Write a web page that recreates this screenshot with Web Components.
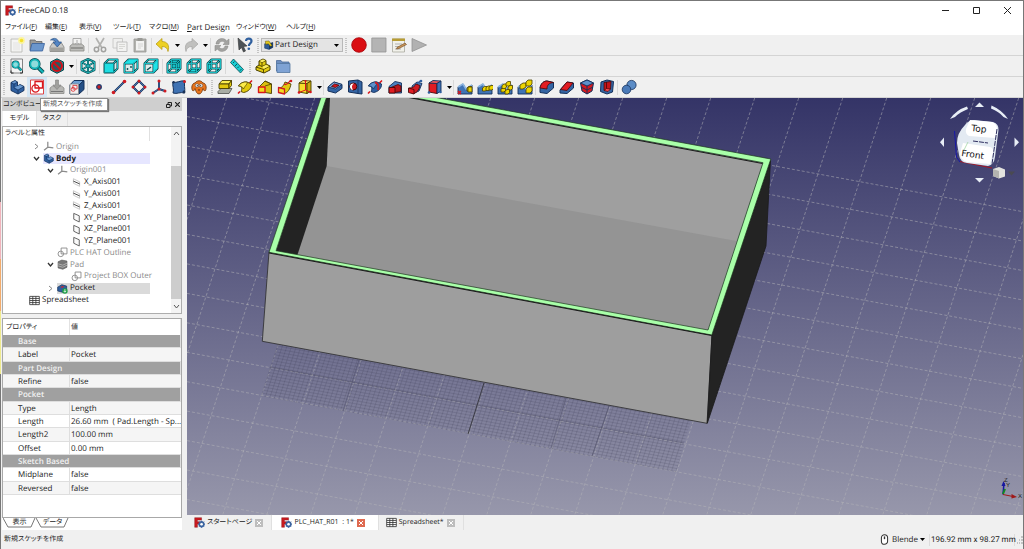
<!DOCTYPE html>
<html lang="ja">
<head>
<meta charset="utf-8">
<title>FreeCAD 0.18</title>
<style>
html,body{margin:0;height:100%}
body{font:8px/12px "Open Sans","Noto Sans CJK JP",sans-serif;font-feature-settings:"palt";text-rendering:geometricPrecision;color:#1a1a1a;background:#f0f0f0;overflow:hidden}
</style>
</head>
<body>
<fc-app></fc-app>
<script>
const BASE = `*{box-sizing:border-box}
button,select{font:inherit;font-feature-settings:inherit;text-rendering:inherit;color:inherit;border:0;background:none;padding:0;margin:0}
svg{display:block}ul{list-style:none;margin:0;padding:0}.ja{font-size:7px}`;

function define(name, render, after) {
  customElements.define(name, class extends HTMLElement {
    connectedCallback() {
      if (this.shadowRoot) return;
      this.attachShadow({ mode: 'open' }).innerHTML = render(this);
      if (after) after(this, this.shadowRoot);
    }
  });
}

/* ---------- icon drawings, 16 x 16 ---------- */
const P = (d, f, s = 'none', w = 1) => `<path d="${d}" fill="${f}" stroke="${s}" stroke-width="${w}" stroke-linejoin="round"/>`;
const C = (x, y, r, f, s = 'none', w = 1) => `<circle cx="${x}" cy="${y}" r="${r}" fill="${f}" stroke="${s}" stroke-width="${w}"/>`;
const DB = '#14305a', DT = '#0a4a50', DY = '#4a4000', DR = '#4a0808';
const box = (a, b, c, s) => P('M1 6L10 6L10 15L1 15Z', a, s) + P('M1 6L5 1.5L15 1.5L10 6Z', b, s) + P('M10 6L15 1.5L15 10.5L10 15Z', c, s);
const frame = (fill) => fill + P('M1.5 5.5H10.5V14.5H1.5ZM1.5 5.5L5.5 1.5H14.5V10.5L10.5 14.5M10.5 5.5L14.5 1.5M5.5 1.5V10.5H14.5M5.5 10.5L1.5 14.5', 'none', DT, 2)
  + P('M1.5 5.5H10.5V14.5H1.5ZM1.5 5.5L5.5 1.5H14.5V10.5L10.5 14.5M10.5 5.5L14.5 1.5M5.5 1.5V10.5H14.5M5.5 10.5L1.5 14.5', 'none', '#19b9be', 1);
const cubeFront = (f) => P('M1.5 5.5H10.5V14.5H1.5ZM1.5 5.5L5.5 1.5H14.5V10.5L10.5 14.5M10.5 5.5L14.5 1.5', '#dfeaea', DT, 2) + P('M1.5 5.5H10.5V14.5H1.5ZM1.5 5.5L5.5 1.5H14.5V10.5L10.5 14.5M10.5 5.5L14.5 1.5', 'none', '#16bfc4', 1) + f;
const magnifier = (s) => `<g transform="${s}">` + P('M9 9L14.5 14.5', 'none', DT, 4) + P('M9 9L14.5 14.5', 'none', '#16b5b9', 2.4) + C(6, 6, 4.4, '#d5eeee', DT, 3) + C(6, 6, 4.4, '#8edcdc', '#16b5b9', 1.8) + '</g>';
const padShape = (f, g, s) => P('M1 12.5L4 9.500H15L12 14.500H1Z', '#a9ada5', '#4c4f4b', .8) + P('M2 5L5 1.500H14.500L12 5Z', f, s, .9) + P('M2 5H12V9.5H2Z', g, s, .9) + P('M12 5L14.500 1.500V6.500L12 9.500Z', g, s, .9);
const roll = (f, g, s, ax) => P('M1 14.500L3 12.500M12.500 4L15 1.500', 'none', ax, 1.6) + P('M1.500 7C3 4 7 2.500 10 3L14.500 5C15 9 11 13 6.500 13.500L4 12.500C6 9 4 7 1.500 7Z', g, s, .9) + P('M1.500 7C3 4 7 2.500 10 3C11 5 8 6.500 6.500 10C5.500 8 4 7 1.500 7Z', f, s, .7);
const loft = (f, g, s, r) => P('M2 8L8 2L14.500 5V14.500L8 13.500Z', g, s, .9) + P('M8 2L14.500 5M8 7L14.500 5', 'none', s, .8) + P('M1.500 8H8V13.500H1.500Z', f, r, 1.4);
const sweep = (f, g, s, r) => P('M2 9C5 9 7 6 8 3L14 5C13 10 11 14 7 14.500Z', g, s, .9) + P('M1.500 8.500L7.500 10V15L1.500 13.500Z', f, r, 1.3) + P('M7 5C10 7 12 3 13.500 1.500', 'none', r, 1.3) + C(14, 2, 1.3, r);
const land = P('M1 15V8L6 5L9 10L15 6V15Z', '#3f73b5', DB, .9) + P('M1 8L6 5L9 10L15 6', 'none', '#8ab4e0', 1.6);
const yb = (x, y) => P(`M${x} ${y}l2-1.500h2.500v3l-1.500 1.500h-3Z`, '#edd400', DY, .8);
const fbox = box('#3465a4', '#6fa0d4', '#244f86', DB);
const sheetIcon = P('M1 2H15V14H1Z', '#fff', '#333', 1.2) + P('M1 5H15M1 8H15M1 11H15M5.500 2V14M10 2V14', 'none', '#333', 1.2);
const sketchRed = (c) => P('M6 2.500H13.500V9H6Z', 'none', c, 1.3) + C(6.500, 9.500, 3.600, 'none', c, 1.3);
const ICONS = {
  logo: P('M1 1H11V4.500H5V7H9V10H5V15H1Z', '#cb1b20', '#7c0d10', .6) + C(11, 10.500, 3.300, 'none', '#3b63a0', 2.600) + P('M11 5.200V16M5.700 10.500H16M7.200 6.700L14.800 14.300M14.800 6.700L7.200 14.300', 'none', '#3b63a0', 1.100) + C(11, 10.500, 1.800, '#fff'),
  new: P('M2 2H13V15H2Z', '#f5f5f4', '#b5b5b0', .8) + P('M4 13.500H11V5H4Z', '#ececeb') + C(12.500, 3.500, 3.400, '#fbf4a0') + C(12.500, 3.500, 1.800, '#f4df2a'),
  open: P('M1 13V3H6L7 4.500H13V13Z', '#9a9a98', '#666', .8) + P('M3 6.500H15.500L13.500 14H1Z', '#6b96cc', '#37609a', .8),
  save: P('M1 10L3.500 6H12.500L15 10V14.500H1Z', '#c9c9c7', '#83837f', .8) + P('M1.500 10.500H14.500V14H1.500Z', '#a2a29e') + P('M1.500 3C5 0 9 1.500 9.500 5H12.500L8.300 10L4 5H6.500C6 3.200 4 2.600 1.500 3Z', '#5285c4', '#264f83', .7),
  print: P('M4 1.500H12V8H4Z', '#f3f3f2', '#999', .8) + P('M1 9L3.500 7H12.500L15 9V14H1Z', '#bdbdba', '#888884', .8) + P('M2 11H14', 'none', '#858581', 1.400) + P('M8 3V8M6 6L8 8.200L10 6', 'none', '#aaa', 1),
  cut: P('M4 1L10 11M12 1L6 11', 'none', '#b2b2b0', 1.700) + C(4.500, 12.500, 2.200, 'none', '#a2a2a0', 1.500) + C(11.500, 12.500, 2.200, 'none', '#a2a2a0', 1.500),
  copy: P('M1 1.500H10.500V11H1Z', '#efefee', '#c6c6c4', .9) + P('M5 5H15V14.500H5Z', '#f2f2f1', '#bababa', .9) + P('M7 7.500H13M7 9.500H13M7 11.500H11', 'none', '#cfcfcd', .8),
  paste: P('M2 2H14V15H2Z', '#b2b2ae', '#989894', .8) + P('M4 4H12V13.500H4Z', '#f3f3f2') + P('M5.500 1H10.500V4H5.500Z', '#999995') + P('M6 7H11M6 9H11M6 11H9', 'none', '#ccc', .8),
  undo: P('M1 7L7 1.500V4.500C12 4.500 15 8 13 14.500C12.500 11 10.500 9.500 7 9.500V12.500Z', '#edd023', '#b3970a', .7),
  redo: P('M15 7L9 1.500V4.500C4 4.500 1 8 3 14.500C3.500 11 5.500 9.500 9 9.500V12.500Z', '#c0c0be', '#a5a5a3', .7),
  refresh: P('M2 7C2.500 1 10.500 0 12.500 4L15 2V7.500H9L11 5.700C9 3.500 5.500 4 5 7ZM14 9C13.500 15 5.500 16 3.500 12L1 14V8.500H7L5 10.300C7 12.500 10.500 12 11 9Z', '#a3a3a1', '#8d8d8b', .6),
  whats: P('M1 1L10 9L6.500 9.500L8.500 14L6.500 15L4.500 10.500L2 13Z', '#4d5358', '#333', .6) + P('M9 4C9 .8 14.500 .8 14.500 4C14.500 6.500 11.800 6.300 11.800 9', 'none', '#2f5f9e', 2.200) + C(11.800, 11.700, 1.300, '#2f5f9e'),
  wb: P('M1 6V13L8 15L14 12V4L8 6Z', '#2f5c98', DB, .8) + P('M8 6V15L14 12V4Z', '#173863') + P('M2 2L8 1.500L13 9L10 10L7 6L3 7Z', '#e4c91d', DY, .7),
  record: C(8, 8, 7.300, '#da0d12', '#a30006', .8),
  stop: P('M.800 1H15V15H.800Z', '#b4b4b4', '#939393', .8),
  edit: P('M1.500 2H13.500V15H1.500Z', '#f1f1ea', '#a9a99f', .8) + P('M1 1.500H14V4H1Z', '#b79c35') + P('M4 7H11M4 9.500H9M4 12H10', 'none', '#aaa', .9) + P('M6 10.500L14 6L15.500 7.500L8 11.500L5.500 12Z', '#c8955a', '#6d451b', .6),
  play: P('M1 1.500L15.500 8L1 14.500Z', '#b1b1b1', '#939393', .8),
  fitall: P('M2 1H13.500V15H2Z', '#f4f4f4', '#777', .9) + P('M2 12.500V15H4.500M11 15H13.500V12.500', 'none', '#333', 1) + magnifier('translate(2.500 2.500) scale(.68)'),
  fitsel: magnifier('translate(-.3 0)'),
  drawstyle: P('M8 .800L14.500 4V12L8 15.300L1.500 12V4Z', '#159a9e', DT, 1) + C(8, 8, 5, '#2a5a60', '#d01018', 2) + P('M4.500 4.500L11.500 11.500', 'none', '#d01018', 2),
  iso: P('M8 1L14.500 4V12L8 15L1.500 12V4ZM1.500 4L8 8L14.500 4M8 8V15M8 1V8M1.500 12L8 8L14.500 12', '#dfeaea', DT, 2) + P('M8 1L14.500 4V12L8 15L1.500 12V4ZM1.500 4L8 8L14.500 4M8 8V15M8 1V8M1.500 12L8 8L14.500 12', 'none', '#25bcc1', .9),
  front: cubeFront(P('M1.500 5.500H10.500V14.500H1.500Z', '#1fdde2', '#0a8185', .8)),
  top: cubeFront(P('M2 5L5.800 2H14L10.200 5Z', '#1fe3e8') + C(4.500, 11, .9, DT) + C(8, 9, .9, DT)),
  right: cubeFront(P('M11 5.700L14 2.500V10.200L11 13.500Z', '#1fe3e8') + P('M4 12L8 9', 'none', DT, 1.300)),
  rear: frame(P('M5.500 1.500H14.500V10.500H5.500Z', '#12c3c9')),
  bottom: frame(P('M1.500 14.500L5.500 10.500H14.500L10.500 14.500Z', '#22dbe0')),
  left: frame(P('M1.500 14.500V5.500L5.500 1.500V10.500Z', '#22dbe0')),
  measure: P('M4.500 1L14.500 11.500L11.500 15L1.500 4.500Z', '#19cdd2', DT, .8) + P('M5.500 3.500L4 5M8 6L6 8M10 8.500L8.500 10M12.500 11L10.800 12.800', 'none', DT, .9),
  part: P('M1 9L4 7V3L8 1L11 2.500V6L15 8V12L9 15L1 12Z', '#e2cb12', DY, 1) + P('M4 3L7 4.500L11 2.500M7 4.500V8.500L11 6.500M1 9L8.500 11.500L15 8M8.500 11.500V15M4 7L7 8.500', 'none', DY, .9) + P('M4.500 3L8 1.500L10.500 2.600L7 4.200ZM7.300 8.800L11 6.900L14 8.200L9 10.700Z', '#fbee65'),
  group: P('M1.500 13V2.500H6L7 4H14V13Z', '#6d8fc0', '#4c6c9a', .8) + P('M1.500 5.500H15V14.500H2Z', '#7fa3d4', '#54779f', .8),
  body: P('M2 3.500L6 1.500L8.500 3V7L11 5.500L15 7.500V11.500L9 15L2 11.500Z', '#2f5f9f', DB, .9) + P('M2 3.500L5 5V9L9 11L15 7.500M9 11V15M5 5L8.500 3', 'none', DB, .7) + P('M5.500 8.500L8.500 7L11 5.900L14.200 7.500L9 10.400Z', '#6d9bd0') + P('M2.800 3.500L6 2L7.800 3L5 4.500Z', '#6d9bd0'),
  sketch: P('M1.500 1H14.500V15H1.500Z', '#fff', '#d33', .9) + sketchRed('#d8161c'),
  map: P('M1 9L3.500 7H12.500L15 9V14.500H1Z', '#b7b7b4', '#8b8b88', .8) + P('M6.500 1H9.500V6H12L8 10.500L4 6H6.500Z', '#a0a09d', '#82827f', .6) + P('M2 12.500H14', 'none', '#777', 1),
  mapface: fbox + P('M1 5H9.500V15H1Z', '#f2eeee', '#888', .8) + `<g transform="translate(.5 5) scale(.56)">${sketchRed('#d8161c')}</g>`,
  point: C(8, 8, 2.300, '#c81e24', '#1e3d70', 1.300),
  line: P('M2.500 13.500L13.500 2.500', 'none', DB, 1.900) + P('M2.500 13.500L13.500 2.500', 'none', '#4a78b5', .9) + C(2.500, 13.500, 1.800, '#cf1b22') + C(13.500, 2.500, 1.800, '#cf1b22'),
  plane: P('M8 2L14 8L8 14L2 8Z', '#f2f2f2', DB, 2) + P('M8 2L14 8L8 14L2 8Z', 'none', '#4a78b5', .9) + C(2, 8, 1.500, '#cf1b22') + C(14, 8, 1.500, '#cf1b22') + C(8, 2, 1.500, '#cf1b22') + C(8, 14, 1.500, '#cf1b22'),
  lcs: P('M8 2V10L14 12M8 10L2 14', 'none', DB, 1.900) + P('M8 2V10L14 12M8 10L2 14', 'none', '#4a78b5', .8) + C(8, 2, 1.500, '#cf1b22') + C(14, 12, 1.500, '#cf1b22') + C(2, 14, 1.500, '#cf1b22') + C(8, 10, 1.500, '#cf1b22'),
  binder: P('M2 3C6 4.500 9 1 14 2C12.500 6 14.500 9 13.500 14C9 12.500 6 15.500 2 14C3.500 10 1 7 2 3Z', '#3f72b3', DB, 1) + C(13.500, 2.500, 1.500, '#cf1b22') + C(2.500, 3.200, 1.200, '#1a3156') + C(13, 13, 1.400, '#1a3156'),
  clone: P('M4 4C1 4 0 9 1.500 11.500C3 12 4 11 4 9.500C5 13 6 15 8 15S11 13 12 9.500C12 11 13 12 14.500 11.500C16 9 15 4 12 4C10 1 6 1 4 4Z', '#e8741c', '#6e350a', .8) + C(6, 6.500, 1.700, '#fff', '#333', .5) + C(10, 6.500, 1.700, '#fff', '#333', .5) + C(6.300, 6.600, .6, '#222') + C(9.700, 6.600, .6, '#222') + P('M6.800 10.500H9.200L8 12Z', '#50260a'),
  pad: padShape('#fbee50', '#e2c80d', DY), revolve: roll('#fbea4a', '#e0c70e', DY, '#d8161c'), aloft: loft('#f3dc22', '#d9bf10', DY, '#d8161c'), asweep: sweep('#f3dc22', '#e0c70e', DY, '#cf1b22'),
  aprim: P('M2 4L10 4.500V14.500L2 13Z', '#f5df2a', DY, .9) + P('M2 4L6 1.500L14 2L10 4.500Z', '#fbee65', DY, .9) + P('M10 4.500L14 2V12L10 14.500Z', '#c9af0e', DY, .9) + P('M8.500 2V11M2 13.500L8.500 11L14 13.500', 'none', '#d8161c', 1) + C(2, 13.500, 1.300, '#d8161c') + C(13.500, 13, 1.300, '#d8161c') + C(8.500, 2, 1.100, '#d8161c'),
  pocket: P('M1 8L7 3L15 5.500V9.500L8.500 14L1 12Z', '#3465a4', DB, 1) + P('M1 8L7 3L15 5.500L8.500 10Z', '#7aa7da', DB, .8) + P('M4.500 7.500L7.500 5L12 6.200L8.500 8.500Z', '#d8161c', DR, .8),
  hole: P('M1.500 2L11 1L15 3V15L11 14.500L1.500 13Z', '#3465a4', DB, 1) + P('M11 1V14.500', 'none', DB, .8) + C(6.300, 7.500, 3.500, '#cf1b22', DR, 1) + P('M4 5A3.500 3.500 0 0 0 6 11A5 5 0 0 1 7 4.300Z', '#fff'),
  groove: roll('#5d90ca', '#2f5f9f', DB, '#d8161c') + P('M8 3.500C11 4 12 7 11 11', 'none', '#cf1b22', 2),
  sloft: P('M2 7.500L8 2.500L14.500 4V14L2 14Z', '#4b80bf', DB, .9) + P('M4 8.500L11 5.500L14 7V12.500L8 13.500Z', '#b8151b', DR, .8) + P('M2 8.500H8V14H2Z', '#e11c22', DR, .9),
  ssweep: P('M5 7L10 3L15 4.500L12 12L6 14.500Z', '#4b80bf', DB, .9) + P('M2 9C6 9 8 7 9 5L13 6.500C12 11 10 13.500 7 14.500Z', '#cf1b22', DR, .8) + P('M1.500 9L7 10.500V15L1.500 13.500Z', '#e11c22', DR, .9) + P('M10 4.500L14 1.500', 'none', '#2f5f9f', 1.300) + C(14, 2, 1.300, '#2f5f9f'),
  sprim: P('M2 4L10 4.500V14.500L2 13Z', '#e01c22', DR, .9) + P('M2 4L6 1.500L14 2L10 4.500Z', '#f0555a', DB, .9) + P('M10 4.500L14 2V12L10 14.500Z', '#3f73b5', DB, .9) + C(2, 13.500, 1.300, '#2f5f9f') + C(13.500, 13, 1.300, '#2f5f9f'),
  mirror: land + yb(10, 9) + P('M11 8h4v5h-4Z', '#edd400', DY, .8) + P('M1 12L4 15M4 12L1 15', 'none', '#d8161c', 1.200),
  linear: land + yb(5.500, 9) + yb(9, 8.500) + yb(12, 8), polar: land + yb(4, 10) + yb(5, 6.500) + yb(9, 4) + yb(11, 8) + yb(8, 12),
  multi: land + P('M3 6L6 4H9V8L6 10H3Z', '#edd400', DY, .8) + P('M9 3L11 1H15V5L13 7H9Z', '#edd400', DY, .8) + P('M9 10L11 8H15V12L13 14H9Z', '#edd400', DY, .8),
  fillet: P('M1 9C2 4 5 2 8 2L14.500 3.500V9L8 14.500L1 13.500Z', '#3465a4', DB, 1) + P('M1 9C2 4 5 2 8 2L14.500 3.500C10 4 8 6 8 10Z', '#e11c22', DR, .8),
  chamfer: P('M1 11L8 3L14.500 4V9L8 14.500L1 14Z', '#3465a4', DB, 1) + P('M1.500 10.500L8 3L14 4L8 11.500Z', '#e11c22', DR, .8),
  draft: P('M1.500 4L8 1L14.500 4L13 12L8 15L3 12Z', '#d5191f', DB, 1) + P('M1.500 4L8 1L14.500 4L8 7Z', '#5d90ca', DB, .9) + P('M8 7V15M2 8L8 11L14 8', 'none', DB, .9),
  thick: P('M2 3L8 1L14.500 2.500L13.500 13L8 15L1.500 12.500Z', '#3465a4', DB, 1) + P('M5 3.500L12 2.500L11.500 10L5 11.500Z', '#c5141a', DR, .8) + P('M5 11.500L7.500 9.500L11.500 10L9 12.500Z', '#ff4b4f', DR, .7) + P('M7.500 3V9.500', 'none', DR, .8),
  bool: C(10.500, 6, 4.600, '#5b8cc6', DB, .8) + C(5.500, 10.500, 4.300, '#4a7ab8', DB, .8),
  origin: P('M7 1V9L15 10M7 9L1.500 13.500', 'none', '#8b8b8b', 1.800), axis: P('M3.500 2.500L12.500 7M3.500 9L12.500 13.500M3.500 2.500V9M12.500 7V13.500', 'none', '#b0b0b0', 1) + P('M3.500 6L12.500 10', 'none', '#333', 1.300),
  dplane: P('M4 2L12 5.500V14.500L4 10.500Z', '#fafafa', '#555', 1.300),
  gsketch: P('M6 1.500H14.500V10H6Z', 'none', '#888', 1.300) + C(5.500, 10, 4, 'none', '#888', 1.300), gpad: P('M1.500 4L7 1.500L14.500 3V12L8.500 15L1.500 13Z', '#777', '#555', .8) + P('M1.500 7L8.500 9L14.500 6M1.500 10L8.500 12L14.500 9', 'none', '#bbb', 1.200),
  tpocket: P('M1 6L7 2.500L14 4.500V10L8 13.500L1 11.500Z', '#2f5f9f', DB, 1) + P('M4.500 6L7.500 4.300L11 5.300L8 7Z', '#c5292e') + C(11.500, 11.500, 4, '#1f9d45') + P('M11.500 9V13M9.700 11.500L11.500 13.500L13.300 11.500', 'none', '#fff', 1.100),
  sheet: sheetIcon, mouse: P('M3.500 5.500A4.500 4.500 0 0 1 12.500 5.500V10.500A4.500 4.500 0 0 1 3.500 10.500Z', '#fff', '#333', 1.500) + P('M8 3.500V7.500', 'none', '#333', 2)
};
define('fc-icon', el => `<style>:host{display:block;width:16px;height:16px;flex:none}svg{display:block;width:100%;height:100%}</style>
<svg viewBox="0 0 16 16" aria-hidden="true">${ICONS[el.getAttribute('name')] || ''}</svg>`);

/* ---------- title bar and menus ---------- */
define('fc-titlebar', () => `<style>${BASE}
:host{display:flex;align-items:center;height:19px;background:#fff;padding-left:4px}
fc-icon{width:11px;height:11px}h1{font:inherit;margin:0 auto 0 2px}
button{width:31px;height:19px;display:grid;place-items:center}</style>
<fc-icon name="logo"></fc-icon><h1>FreeCAD 0.18</h1>
<button aria-label="最小化"><svg width="7" height="7"><path d="M0 3.500H7" stroke="#222"/></svg></button>
<button aria-label="最大化"><svg width="7" height="7"><path d="M.500 .500H6.500V6.500H.500Z" fill="none" stroke="#222"/></svg></button>
<button aria-label="閉じる"><svg width="7" height="7"><path d="M0 0L7 7M7 0L0 7" stroke="#222"/></svg></button>`);

define('fc-menubar', () => `<style>${BASE}
:host{display:block;background:#fff;height:15px;padding-left:4px}
nav{display:grid;grid-template-columns:40px 34px 34px 36px 38px 49px 50px 40px}
button{text-align:left;height:15px;line-height:15px;white-space:nowrap}</style>
<nav>${[['ファイル', 'F'], ['編集', 'E'], ['表示', 'V'], ['ツール', 'T'], ['マクロ', 'M'], ['', 'P'], ['ウィンドウ', 'W'], ['ヘルプ', 'H']].map(([t, k]) =>
  t ? `<button class="ja">${t}(<u>${k}</u>)</button>` : '<button><u>P</u>art Design</button>').join('')}</nav>`);

/* ---------- toolbars: names in "items", "|" separator, "v" drop arrow, "#" grip ---------- */
define('fc-toolbar', el => `<style>${BASE}
:host{display:flex;align-items:center;height:21px;border-bottom:1px solid #d4d4d4;background:#f0f0f0}
button{width:20px;height:20px;display:grid;place-items:center}
button.v{width:8px}.on{background:#d5e6f4}
i{width:1px;height:15px;margin:0 1px;background:#d8d8d8}
:host([dense]) i{margin:0 1px 0 0}
b{width:2px;height:15px;margin:0 2px;background:repeating-linear-gradient(#c4c4c4 0 1px,#f0f0f0 1px 2px)}
b:first-child{margin:0 1px 0 2px}</style>
${el.getAttribute('items').split(' ').map(n =>
  n === '|' ? '<i></i>' : n === '#' ? '<b></b>' :
  n === 'v' ? '<button class="v" aria-label="メニュー"><svg width="5" height="3"><path d="M0 0H5L2.500 3Z"/></svg></button>' :
  n === 'combo' ? '<slot></slot>' :
  `<button class="${n === 'sketch' ? 'on' : ''}" aria-label="${n}"><fc-icon name="${n}"></fc-icon></button>`).join('')}`);

define('fc-workbench', () => `<style>${BASE}
:host{display:flex;align-items:center;width:82px;height:14px;border:1px solid #b8b8b8;background:#e4e4e4;padding-left:2px;box-sizing:border-box}
fc-icon{width:10px;height:10px}
select{appearance:none;flex:1;min-width:0;height:12px;line-height:12px;padding-left:1px}
svg{margin:0 3px}</style>
<fc-icon name="wb"></fc-icon><select aria-label="ワークベンチ"><option>Part Design</option></select><svg width="5" height="3"><path d="M0 0H5L2.500 3Z"/></svg>`);

/* ---------- model tree ---------- */
const TREE = [['Origin', 1, 'origin', '>', 'g'], ['Body', 1, 'body', 'v', 'b'], ['Origin001', 2, 'origin', 'v', 'g'],
['X_Axis001', 3, 'axis'], ['Y_Axis001', 3, 'axis'], ['Z_Axis001', 3, 'axis'], ['XY_Plane001', 3, 'dplane'], ['XZ_Plane001', 3, 'dplane'], ['YZ_Plane001', 3, 'dplane'],
['PLC HAT Outline', 2, 'gsketch', '', 'g'], ['Pad', 2, 'gpad', 'v', 'g'], ['Project BOX Outer', 3, 'gsketch', '', 'g'], ['Pocket', 2, 'tpocket', '>', 's'], ['Spreadsheet', 0, 'sheet']];
const chevron = k => k === 'v' ? '<svg width="7" height="7"><path d="M1 2L3.500 5L6 2" fill="none" stroke="#333" stroke-width="1.300"/></svg>'
  : '<svg width="7" height="7"><path d="M2 1L5 3.500L2 6" fill="none" stroke="#888"/></svg>';
define('fc-tree', () => `<style>${BASE}
:host{display:flex;height:188px;flex:none;background:#fff;border:1px solid #adadad;box-sizing:border-box}
.main{flex:1;min-width:0;display:flex;flex-direction:column;padding-left:2px;margin-right:21px}
h2{font:inherit;font-size:7px;margin:0;height:14px;line-height:14px;border-right:1px solid #e0e0e0;flex:none}
ul{height:165px;display:flex;flex-direction:column}
li{flex:1;display:flex;align-items:center;white-space:nowrap;padding-left:calc(10px + var(--l)*14px)}
li button{width:14px;flex:none;height:11px;display:grid;place-items:center}
fc-icon{width:11px;height:11px}
span{flex:1;min-width:0;display:flex;align-items:center;gap:2px;height:11px}
.g{color:#8a8a8a}.b span{font-weight:700;background:#e6e6ff}.s span{background:#dadada}
.bar{width:10px;flex:none;display:flex;flex-direction:column;align-items:center;background:#f3f3f3}
.bar button{height:14px}.thumb{width:10px;height:136px;margin-top:25px;background:#cdcdcd}</style>
<div class="main"><h2>ラベルと属性</h2><ul role="tree">${TREE.map(([t, l, ic, a = '', c = '']) =>
  `<li role="treeitem" class="${c}" style="--l:${l}">${a ? `<button aria-label="展開">${chevron(a)}</button>` : '<button tabindex="-1" aria-hidden="true"></button>'}<span><fc-icon name="${ic}"></fc-icon>${t}</span></li>`).join('')}</ul></div>
<div class="bar"><button aria-label="上"><svg width="7" height="5"><path d="M1 4L3.500 1L6 4" fill="none" stroke="#555"/></svg></button><div class="thumb"></div><button aria-label="下"><svg width="7" height="5"><path d="M1 1L3.500 4L6 1" fill="none" stroke="#555"/></svg></button></div>`);

/* ---------- property table ---------- */
const PROPS = [['Base'], ['Label', 'Pocket'], ['Part Design'], ['Refine', 'false'], ['Pocket'], ['Type', 'Length'], ['Length', '26.60 mm&nbsp; ( Pad.Length - Sp...'],
['Length2', '100.00 mm'], ['Offset', '0.00 mm'], ['Sketch Based'], ['Midplane', 'false'], ['Reversed', 'false']];
define('fc-properties', () => `<style>${BASE}
:host{display:block;flex:1;background:#fff;border:1px solid #a8a8a8}
table{border-collapse:separate;border-spacing:0;table-layout:fixed;width:100%;height:176px}
th,td{padding:1px 0 0 1px;text-align:left;font-weight:400;white-space:nowrap;overflow:hidden;border-bottom:1px solid #dedede;line-height:11px}
thead th{height:16px;font-size:7px;border:0;border-right:1px solid #e2e2e2}thead th:first-child{padding-left:3px}
tbody th{padding-left:15px;border-right:1px solid #dedede}
.h th{background:#a0a0a0;color:#f2f2f2;font-weight:600}tr.o>*{background:#f5f5f5}</style>
<table><colgroup><col style="width:67px"><col></colgroup><thead><tr><th>プロパティ</th><th>値</th></tr></thead><tbody>
${PROPS.map(([a, b], i) => b ? `<tr class="${i % 2 ? 'o' : ''}"><th scope="row">${a}</th><td>${b}</td></tr>` : `<tr class="h"><th colspan="2">${a}</th></tr>`).join('')}</tbody></table>`);

define('fc-combo-view', () => `<style>${BASE}
:host{display:flex;flex-direction:column;width:186px;flex:none;padding:0 5px 0 1px;position:relative;font-size:7px;box-sizing:border-box}
fc-tree,fc-properties{font-size:8px}
header{display:flex;align-items:center;height:13px;background:#cfcfcf;padding-left:1px}
h2{font:inherit;margin:0 auto 0 0}header button{width:9px;display:grid;place-items:center}
.tabs{display:flex;height:15px;padding-left:1px}.tabs button{width:31px;border-right:1px solid #e0e0e0}.tabs button:first-child{width:34px;background:#fff}
.tip{position:absolute;left:39px;top:0;width:68px;height:13px;line-height:11px;padding-left:2px;background:#fff;border:1px solid #8c8c8c;box-shadow:1px 1px 1px #777;color:#555;white-space:nowrap}
fc-properties{margin-top:4px}
.low{display:flex;height:12px;align-items:flex-start;background:#fff;padding-left:1px}
.low button{position:relative;height:10px;line-height:10px;width:33px}
.low svg{position:absolute;left:0;top:0}
</style>
<header><h2>コンボビュー</h2><button aria-label="フロート"><svg width="6" height="6"><path d="M.500 2.500H4V5.500H.500ZM2 2V.500H5.500V4H4" fill="none" stroke="#222"/></svg></button><button aria-label="閉じる"><svg width="5" height="5"><path d="M0 0L5 5M5 0L0 5" stroke="#222" stroke-width="1.200"/></svg></button></header>
<div class="tabs"><button>モデル</button><button>タスク</button></div>
<fc-tree></fc-tree><fc-properties></fc-properties>
<div class="low"><button>表示<svg width="33" height="10"><path d="M0 0L5 9H28L32 0" fill="none" stroke="#777"/></svg></button><button>データ<svg width="33" height="10"><path d="M0 0L5 9H28L32 0" fill="none" stroke="#777"/></svg></button></div>
<div class="tip" role="tooltip">新規スケッチを作成</div>`);

/* ---------- 3D view: a skewed 44 x 29.5 cell grid with the box model over it ---------- */
function gridLines() {
  let d = '';
  for (let k = -11; k < 12; k++) d += `M187 ${(381.7 + 29.45 * k).toFixed(1)}L1023 ${(535.6 + 29.45 * k).toFixed(1)}`;
  for (let x = 226.7 - 44 ; x < 1200; x += 44) d += `M${x.toFixed(1)} 98L${(x - 136).toFixed(1)} 515`;
  return d;
}
function fineLines() {
  let d = '';
  for (let i = 0; i <= 94; i++) { const x = 261 + 4.415 * i, y = 396 + .803 * i; d += `M${x.toFixed(1)} ${y.toFixed(1)}l20 -60`; }
  for (let j = 0; j <= 20; j++) { const x = 261 + .96 * j, y = 396 - 2.95 * j; d += `M${x.toFixed(1)} ${y.toFixed(1)}l415 75.500`; }
  return d;
}
define('fc-view3d', () => `<style>:host{display:block;flex:1;min-height:0;overflow:hidden}svg{display:block;width:100%;height:100%}</style>
<svg viewBox="187 98 836 417" preserveAspectRatio="xMidYMid slice" role="img" aria-label="3D">
<defs><linearGradient id="bg" x2="0" y2="1"><stop offset="0" stop-color="#343467"/><stop offset="1" stop-color="#9797ab"/></linearGradient>
<clipPath id="fc"><path d="M277 344L691 420L676 472L261 396Z"/></clipPath></defs>
<path d="M187 98H1023V515H187Z" fill="url(#bg)"/>
<path d="${gridLines()}" fill="none" stroke="#b4b4b8" stroke-width=".8" stroke-dasharray="3 2" opacity=".65"/>
<g clip-path="url(#fc)" fill="none"><path d="${fineLines()}" stroke="#35354f" stroke-width=".5" opacity=".34"/>
<path d="M269 367L684 443M359 360L343 411M566 398L551 448M609 406L592 456" stroke="#3a3a50" opacity=".5" stroke-width=".7"/><path d="M484 383L468 434" stroke="#222" stroke-width=".7"/></g>
<path d="M262.300 341.300L269 252L712 335L707 423.300Z" fill="#9e9e9e" stroke="#2b2b2b" stroke-width=".8"/>
<path d="M712 334L770.500 160L766 246L707.300 423.300Z" fill="#232323" stroke="#1b1b1b" stroke-width=".8"/>
<path d="M326.700 90L410.700 97.700L763 162.700L708 330L276 250.700Z" fill="#9f9f9f"/>
<path d="M326.700 166L736.500 241L708 330L297 255Z" fill="#949494"/>
<path d="M328 90L330 98L326.700 166L297.400 255L276 251Z" fill="#232323"/>
<path d="M323.500 90L269 252.300L711.800 335L770.800 159L382 87.500V91.800L763 162.700L708 330L276 250.700L329 90Z" fill="#a9ffa9" stroke="#1e3a1e" stroke-width=".7"/>
<path d="M269 253L711.500 335.500M382 92.500L762.500 163.500" stroke="#1a1a1a" fill="none"/>
<g fill="#e8eef6"><path d="M975 107L979.500 102.500L984 107Z"/><path d="M975 178L984 178L979.500 182.500Z"/><path d="M944 137.500V147L940 142.200Z"/><path d="M1014.500 137.500V147L1019 142.200Z"/>
<path d="M950 119Q956 110 967 106.500L968 109Q960 112 955 117Z"/><path d="M1008 119Q1002 110 991.500 105.500L991 108.500Q999 111.500 1003.500 117Z"/></g>
<path d="M954.500 131L956.500 157L960 162" fill="none" stroke="#1616a8"/><path d="M960 161.500L992 168" stroke="#a51624"/>
<path d="M965 125Q969 120 974 120L993 122Q999 124 998.500 130L995 157Q994 165 988 166L967 163Q960 162 959 155L957 143Q957 133 965 125Z" fill="#e3eaf2"/>
<path d="M970 120L992 122Q997 124 997 129L995 138L969 136Q965 134 966 129Z" fill="#fff"/><path d="M963 143L990 147Q994 148 993 153L990 164L967 162Q961 161 960 153Z" fill="#fff"/>
<path d="M997 129L992 164M973 141L988 143" stroke="#303060" fill="none" stroke-dasharray="5 1"/><path d="M968 142L964 150" stroke="#9bd29b" stroke-width=".7"/>
<g font-family="DejaVu Sans, sans-serif" font-size="9" fill="#111"><text transform="translate(971 131) rotate(6)">Top</text><text transform="translate(961 156) rotate(8)">Front</text></g>
<path d="M993 169L999 167L1005 169.500V176.500L999 178.500L993 176Z" fill="#e3e3df"/><path d="M993 169L999 171V178.500L993 176Z" fill="#b4b4b0"/><path d="M1008 171.500H1015L1011.500 175.500Z" fill="#4a4a52"/>
<path d="M1003 494.500L1004 483" stroke="#1717a0" stroke-width="1.500"/><path d="M1001.500 486L1003.500 481L1005.500 486Z" fill="#1717a0"/><path d="M1003 494L1005 489" stroke="#118a20" stroke-width="2"/>
<path d="M1003 494.500L1013 496.500" stroke="#a01818"/><path d="M1011.500 494L1017 497L1011.500 498.500Z" fill="#a01818"/>
<g font-family="Liberation Sans, sans-serif" font-size="6" fill="#222"><text x="1004" y="482">Z</text><text x="1006" y="487">Y</text><text x="1018" y="498">X</text></g>
</svg>`);

define('fc-doc-tab', el => `<style>${BASE}
:host{display:flex;align-items:center;height:15px;padding:0 8px 0 7px;gap:2px;font-size:7px;white-space:nowrap;border-right:1px solid #e0e0e0;box-sizing:border-box}
:host([active]){background:#fff;padding:0 13px 0 9px}fc-icon{width:11px;height:11px}.x{width:8px;height:8px;margin-left:1px;background:${el.hasAttribute('active') ? '#df6a50' : '#bdbdbd'};display:grid;place-items:center}</style>
<fc-icon name="${el.getAttribute('icon')}"></fc-icon><button><slot></slot></button><button class="x" aria-label="閉じる"><svg width="4" height="4"><path d="M0 0L4 4M4 0L0 4" stroke="#fff"/></svg></button>`);

define('fc-statusbar', () => `<style>${BASE}
:host{display:flex;align-items:center;height:19px;background:#f0f0f0;padding-left:3px}
p{margin:0 auto 0 0}button{display:flex;align-items:center;gap:2px}fc-icon{width:11px;height:11px}
.dim{border-left:1px solid #ddd;border-right:1px solid #ddd;padding:0 1px;margin:0 1px 0 4px;font-family:Roboto,sans-serif;width:86px;white-space:nowrap}</style>
<p class="ja">新規スケッチを作成</p><button><fc-icon name="mouse"></fc-icon>Blende<svg width="5" height="3"><path d="M0 0H5L2.500 3Z"/></svg></button><span class="dim">196.92 mm x 98.27 mm</span>
<svg width="7" height="9"><path d="M5 2h2M3 5h1M5 5h2M1 8h1M3 8h1M5 8h2" stroke="#b5b5b5" stroke-width="1.500"/></svg>`);

define('fc-app', () => `<style>${BASE}
:host{display:grid;grid-template-columns:1px 1fr 1px;height:100vh;border-top:1px solid #777;border-bottom:1px solid #777;box-sizing:border-box}
.edge{background:linear-gradient(#777 0 201px,#f0b2ba 201px 258px,#f2ab6a 258px 310px,#eeea8e 310px 373px,#777 373px)}.r{background:#777}
.win{display:flex;flex-direction:column;min-width:0;height:100%}
.bars{display:flex;flex-direction:column;flex:none}
.work{flex:1;display:flex;min-height:0}.mdi{flex:1;display:flex;flex-direction:column;min-width:0}
.tabs{display:flex;height:15px;flex:none}</style>
<div class="edge"></div><div class="win"><fc-titlebar></fc-titlebar><fc-menubar></fc-menubar>
<div class="bars">
<fc-toolbar items="# new open save print | cut copy paste | undo v redo v | refresh | whats # combo # record stop edit play"><fc-workbench></fc-workbench></fc-toolbar>
<fc-toolbar items="# fitall fitsel drawstyle v | iso | front top right | rear bottom left | measure # part group"></fc-toolbar>
<fc-toolbar dense items="# body sketch map mapface | point line plane lcs binder clone # pad revolve aloft asweep aprim v | pocket hole groove sloft ssweep sprim v | mirror linear polar multi | fillet chamfer draft thick | bool"></fc-toolbar></div>
<div class="work"><fc-combo-view></fc-combo-view><div class="mdi"><fc-view3d></fc-view3d>
<div class="tabs"><fc-doc-tab icon="logo">スタートページ</fc-doc-tab><fc-doc-tab icon="logo" active>PLC_HAT_R01&nbsp; : 1*</fc-doc-tab><fc-doc-tab icon="sheet">Spreadsheet*</fc-doc-tab></div></div></div>
<fc-statusbar></fc-statusbar></div><div class="edge r"></div>`);
</script>
</body>
</html>
